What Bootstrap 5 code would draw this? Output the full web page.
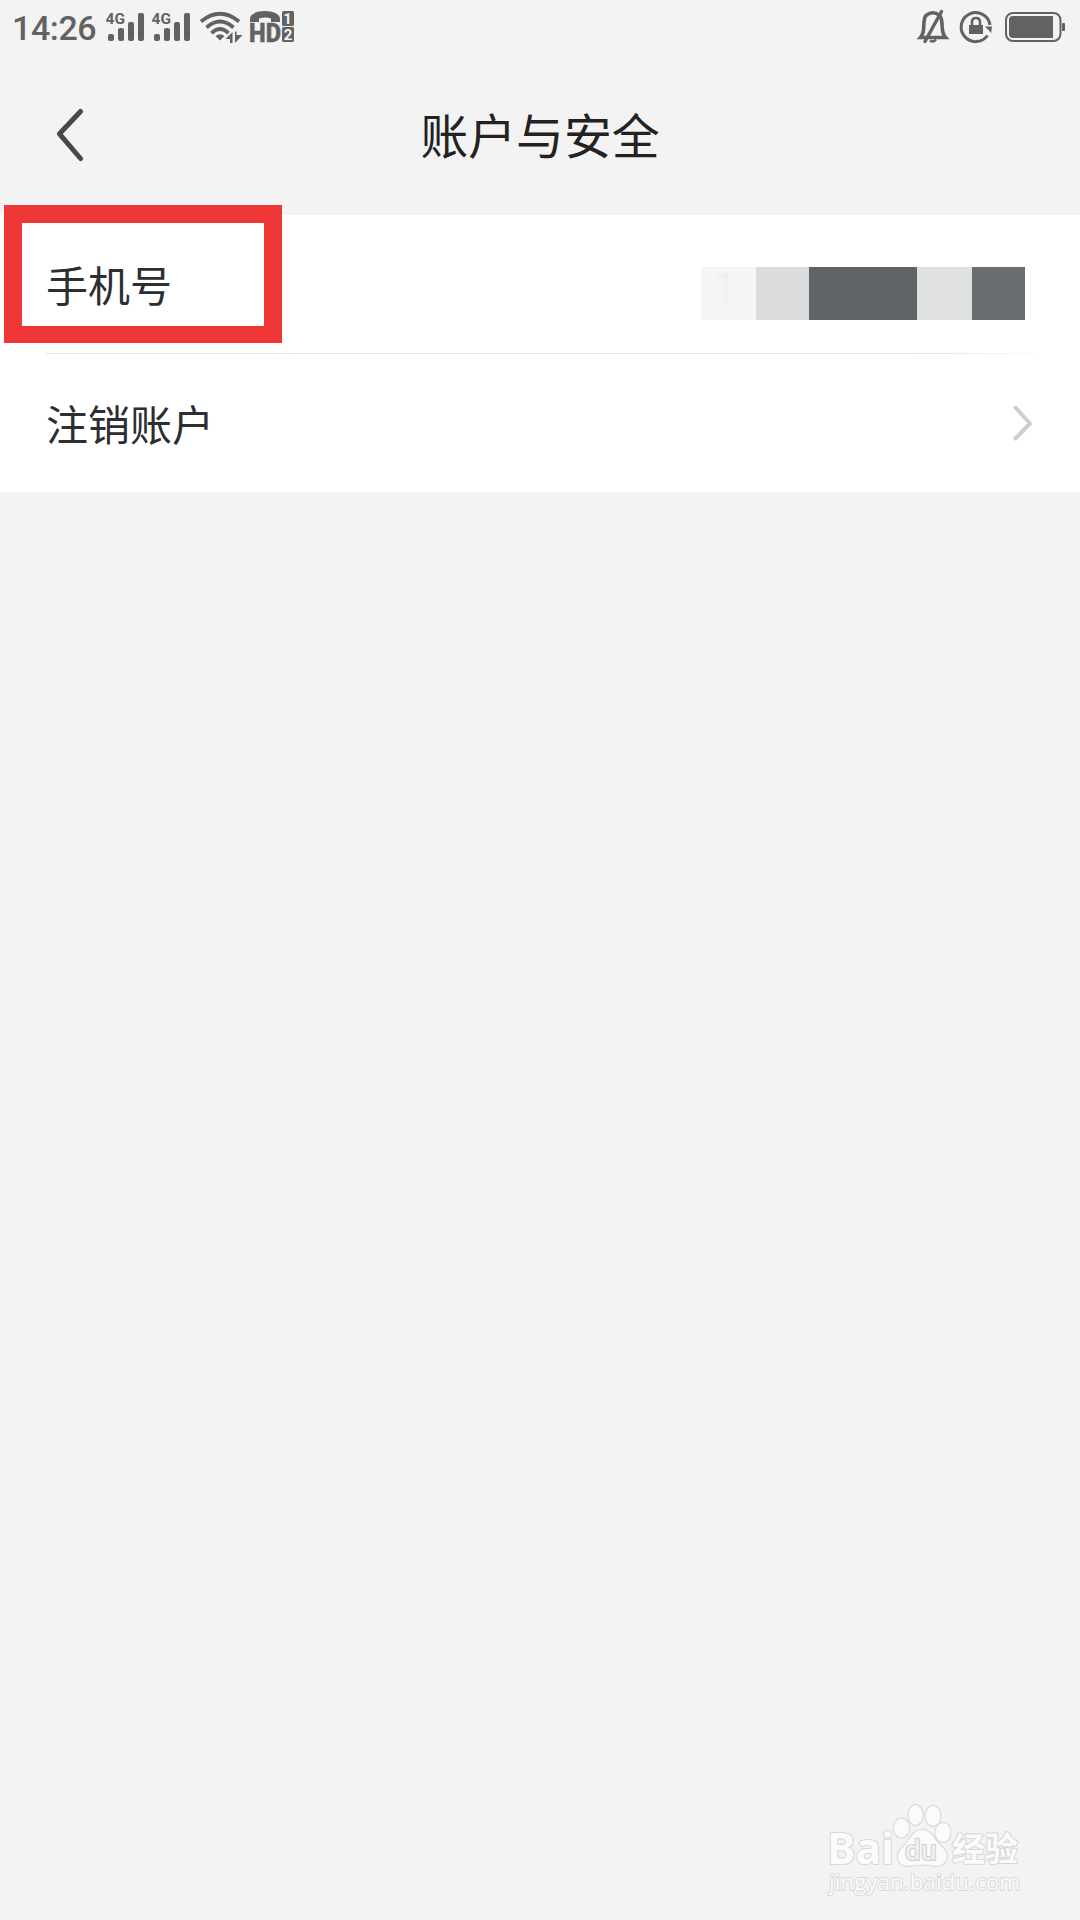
<!DOCTYPE html>
<html lang="zh-CN">
<head>
<meta charset="utf-8">
<meta name="viewport" content="width=device-width, initial-scale=1">
<title>账户与安全</title>
<link href="https://cdn.jsdelivr.net/npm/bootstrap@5.3.0/dist/css/bootstrap.min.css" rel="stylesheet">
<style>
  body { background: #f3f3f3; font-family: Roboto, "Noto Sans CJK SC", sans-serif; min-height: 1920px; }
  svg { display: block; flex: none; }
  .status-bar { height: 52px; padding: 0 15px 0 12px; color: #626262; }
  .clock { font-size: 34px; font-weight: 500; line-height: 52px; width: 94px; padding-top: 3px; letter-spacing: -.4px; }
  .title-bar { height: 163px; padding: 0 54px; color: #222; }
  .title-bar h1 { font-size: 47.800px; font-weight: 400; line-height: 70px; padding-top: 8px; }
  .title-side { width: 60px; }
  .setting { height: 138px; padding: 0 46px; color: #2b2f32; font-size: 42px; line-height: 60px; }
  .setting-inner { padding-top: 7px; }
  .rule { height: 1px; margin: 0 46px; background: linear-gradient(90deg, #e2e2e2 88%, #fafafa); }
  .mosaic { height: 53px; margin: 18px 9px 0 0; font-size: 42px; line-height: 42px; }
  .mosaic span { height: 53px; }
  .m1 { width: 55px; background: #f5f5f5; color: #f0f0f0; padding-left: 12px; }
  .m2 { width: 53px; background: #dbdcde; }
  .m3 { width: 108px; background: #5f6466; }
  .m4 { width: 55px; background: #dfe1e0; }
  .m5 { width: 53px; background: #686d6f; }
  .marker { left: 4px; top: 205px; width: 278px; height: 138px; border: 18px solid #ef3737; border-bottom-width: 17px; }
  .brand { padding: 0 54px 18px 0; }
</style>
</head>
<body class="d-flex flex-column position-relative">
  <header>
    <div class="status-bar d-flex align-items-center justify-content-between">
      <div class="d-flex align-items-center">
        <span class="clock">14:26</span>
        <svg width="194" height="52" viewBox="106 0 194 52" fill="currentColor">
          <g id="sim">
            <text x="105.500" y="24" font-family="Roboto" font-weight="700" font-size="15.500">4G</text>
            <rect x="108" y="34" width="6" height="7" rx="2"/>
            <rect x="118" y="28" width="6" height="13" rx="2"/>
            <rect x="128" y="22" width="6" height="19" rx="2"/>
            <rect x="138" y="13" width="6" height="28" rx="2"/>
          </g>
          <use href="#sim" x="46"/>
          <g fill="none" stroke="currentColor" stroke-width="3.800">
            <path d="M201 21.500Q220 6 239 21.500"/>
            <path d="M206.500 27.500Q220 15.500 233.500 27.500"/>
            <path d="M211.500 33.200Q220 25 228.500 33.200"/>
          </g>
          <path d="M215.500 36Q220 32.500 224.500 36L220 40.500ZM232.500 32V43H230V39H225.500ZM235 31.500H236.500V35H242.500L235 43Z"/>
          <path d="M250 22V18.500C250 14 257 11 265 11S280 14 280 18.500V22H271V18.500Q265 16.500 259 18.500V22Z"/>
          <text x="249" y="42" font-family="Roboto" font-weight="800" font-size="26" stroke="currentColor" stroke-width=".5" textLength="32" lengthAdjust="spacingAndGlyphs">HD</text>
          <rect x="282" y="11" width="12" height="15" rx="1.500"/>
          <rect x="282" y="27" width="12" height="15" rx="1.500"/>
          <g font-family="Roboto" font-weight="700" font-size="15" fill="#f3f3f3" text-anchor="middle">
            <text x="287.500" y="24">1</text><text x="288" y="40">2</text>
          </g>
        </svg>
      </div>
      <svg width="149" height="52" viewBox="916 0 149 52" fill="none" stroke="currentColor">
        <path d="M920.500 37.500C926.500 31 921.500 21 926 15.500Q933 10 939.500 15.500C944.500 21 939.500 31 945.500 37.500Z" stroke-width="3.600"/>
        <path d="M925 41.500L941.500 11.500" stroke-width="3.400" stroke-linecap="round"/>
        <path d="M930 40.500Q933 43 936 39.500" stroke-width="2.500"/>
        <path d="M987.500 35.500A14.500 14.500 0 1 1 990 25" stroke-width="3"/>
        <path d="M985 26.500H992L991.200 33Z" fill="currentColor" stroke="none"/>
        <rect x="969" y="25" width="14" height="9" fill="currentColor" stroke="none"/>
        <path d="M972 26V22Q972 18 976 18T980 22V26" stroke-width="2.600"/>
        <rect x="1006" y="13" width="54.500" height="28" rx="7" stroke-width="2"/>
        <path d="M1013 16H1053V38H1013Q1009 38 1009 34V20Q1009 16 1013 16Z" fill="currentColor" stroke="none"/>
        <rect x="1062" y="23" width="3" height="8" rx="1" fill="currentColor" stroke="none"/>
      </svg>
    </div>
    <div class="title-bar d-flex align-items-center justify-content-between">
      <div class="title-side">
        <svg width="34" height="56" viewBox="54 106 34 56" fill="none" stroke="#484848" stroke-width="5" stroke-linecap="round" stroke-linejoin="round"><path d="M80.500 111.500L59.500 133.800L80.500 158.500"/></svg>
      </div>
      <h1 class="m-0">账户与安全</h1>
      <div class="title-side"></div>
    </div>
  </header>
  <main class="bg-white">
    <div class="setting d-flex align-items-center justify-content-between">
      <span class="setting-inner">手机号</span>
      <div class="mosaic d-flex">
        <span class="m1">1</span><span class="m2"></span><span class="m3"></span><span class="m4"></span><span class="m5"></span>
      </div>
    </div>
    <div class="rule"></div>
    <div class="setting d-flex align-items-center justify-content-between">
      <span class="setting-inner">注销账户</span>
      <svg width="22" height="38" viewBox="1012 404 22 38" fill="none" stroke="#cecece" stroke-width="4" stroke-linecap="round" stroke-linejoin="round"><path d="M1015.500 407.500L1030 423.500L1015.500 438.500"/></svg>
    </div>
  </main>
  <div class="marker position-absolute"></div>
  <footer class="brand mt-auto d-flex justify-content-end">
    <svg width="200" height="100" viewBox="826 1802 200 100" fill="#fbfbfb" stroke="#d8d8d8" stroke-width="2.200" paint-order="stroke" stroke-linejoin="round">
      <text x="827" y="1864" font-family="Open Sans" font-weight="700" font-size="43" textLength="67" lengthAdjust="spacingAndGlyphs">Bai</text>
      <ellipse cx="901.500" cy="1828" rx="7.500" ry="9.500"/>
      <ellipse cx="915.500" cy="1815" rx="7" ry="10"/>
      <ellipse cx="933" cy="1816" rx="7.500" ry="10"/>
      <ellipse cx="943" cy="1832.500" rx="7.500" ry="9.500"/>
      <path d="M922 1830C932 1830 934 1840 942 1847C951 1856 946 1866 936 1866Q922 1863 909 1866C897 1866 895 1855 902 1848C910 1841 912 1830 922 1830Z"/>
      <text x="905" y="1860" font-family="Open Sans" font-weight="600" font-size="27" fill="#f0f0f0" stroke="#cfcfcf" textLength="32" lengthAdjust="spacingAndGlyphs">du</text>
      <text x="952" y="1861" font-family="Noto Sans CJK SC" font-weight="700" font-size="33" textLength="66">经验</text>
      <text x="829" y="1890" font-family="Open Sans" font-weight="400" font-size="21.500" stroke-width="1.800" textLength="191" lengthAdjust="spacingAndGlyphs">jingyan.baidu.com</text>
    </svg>
  </footer>
<script src="https://cdn.jsdelivr.net/npm/bootstrap@5.3.0/dist/js/bootstrap.bundle.min.js"></script>
</body>
</html>
